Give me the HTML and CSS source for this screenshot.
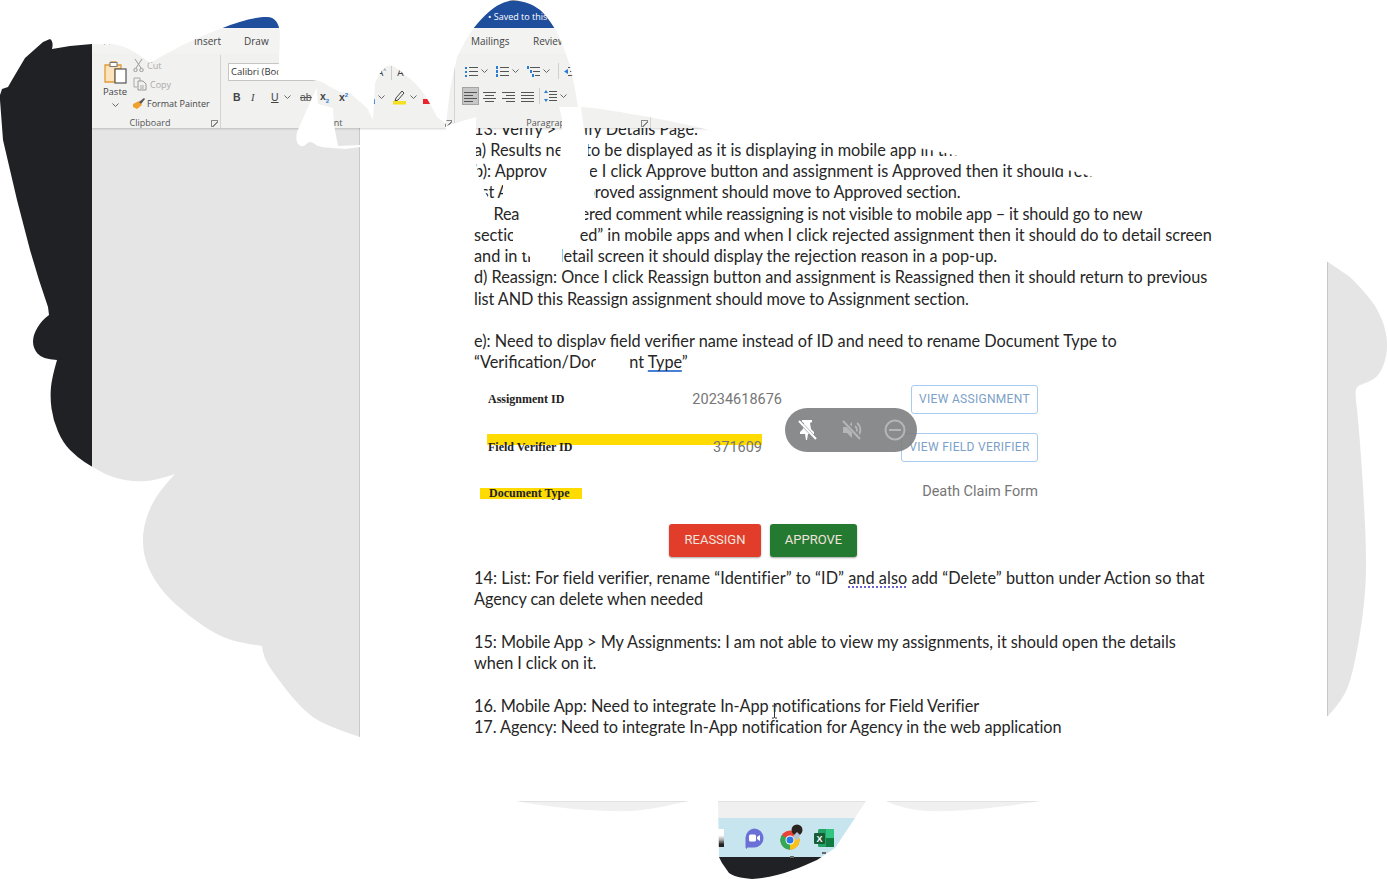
FILE: index.html
```html
<!DOCTYPE html>
<html lang="en">
<head>
<meta charset="utf-8">
<title>Word document</title>
<link rel="stylesheet" href="styles.css">
</head>
<body>
<div class="screen">
  <div class="rail"></div>
  <div class="main">
    <div class="topstrip"></div>
    <div class="titlebar"><span class="saved">• Saved to this PC</span></div>
    <div class="tabs">
      <span class="tab tab-file">File</span>
      <span class="tab tab-home">Home</span>
      <span class="tab tab-insert">Insert</span>
      <span class="tab tab-draw">Draw</span>
      <span class="tab tab-design">Design</span>
      <span class="tab tab-layout">Layout</span>
      <span class="tab tab-mail">Mailings</span>
      <span class="tab tab-review">Review</span>
    </div>
    <div class="ribbon">
      <section class="group g-clip">
        <div class="g-body clip-body">
          <div class="paste">
            <svg width="24" height="24" viewBox="0 0 24 24"><path d="M2 5h5l1-3h5l1 3h4v4H12v13H2z" fill="#fbe3bd" stroke="#e59a35" stroke-width="1.3"/><rect x="7" y="2.500" width="7" height="4" fill="#fff" stroke="#777"/><rect x="12" y="9" width="11" height="14" fill="#fff" stroke="#555" stroke-width="1.2"/></svg>
            <span class="paste-label">Paste</span>
            <svg class="chev" width="7" height="4" viewBox="0 0 7 4"><path d="M.5.5 3.500 3.500 6.500.5" fill="none" stroke="#666"/></svg>
          </div>
          <div class="clip-list">
            <span class="clip-item muted"><svg width="11" height="14" viewBox="0 0 11 14"><path d="M2 1l6 9M9 1 3 10" stroke="#999" fill="none"/><circle cx="2.500" cy="12" r="1.700" fill="none" stroke="#999"/><circle cx="8.500" cy="12" r="1.700" fill="none" stroke="#999"/></svg>Cut</span>
            <span class="clip-item muted"><svg width="14" height="14" viewBox="0 0 14 14"><path d="M1 1h6v3M1 1v9h3" fill="none" stroke="#aaa"/><path d="M5 4h5l3 3v6H5z" fill="none" stroke="#999"/><path d="M7 9h4M7 11h4" stroke="#aaa"/></svg>Copy</span>
            <span class="clip-item clip-fp"><svg width="14" height="13" viewBox="0 0 14 13"><path d="M1 7l6-3 3 4-5 4-4-2z" fill="#f0a12c"/><path d="M7 5l5-4 1 1-4 5" fill="#555"/></svg>Format Painter</span>
          </div>
        </div>
        <div class="g-label g-label-clip">Clipboard<span class="launcher"></span></div>
      </section>
      <section class="group g-font">
        <div class="font-row1">
          <span class="fontbox">Calibri (Body)</span>
          <span class="grow-a">A<sup>^</sup></span>
          <span class="grow-sep"></span>
          <span class="grow-b">A</span>
        </div>
        <div class="font-row2">
          <b class="fb f-b">B</b>
          <i class="fb f-i">I</i>
          <u class="fb f-u">U</u>
          <svg class="chev c-u" width="7" height="4" viewBox="0 0 7 4"><path d="M.5.5 3.500 3.500 6.500.5" fill="none" stroke="#666"/></svg>
          <s class="fb f-s">ab</s>
          <span class="fb f-x">x<sub>2</sub></span>
          <span class="fb f-x2">x<sup>2</sup></span>
          <span class="effects"></span>
          <svg class="chev c-e" width="7" height="4" viewBox="0 0 7 4"><path d="M.5.5 3.500 3.500 6.500.5" fill="none" stroke="#666"/></svg>
          <svg class="hl" width="13" height="15" viewBox="0 0 13 15"><path d="M3 8l6-7 2 2-6 7-3 1z" fill="none" stroke="#444"/><rect y="11" width="13" height="3.500" fill="#f7e11e"/></svg>
          <svg class="chev c-h" width="7" height="4" viewBox="0 0 7 4"><path d="M.5.5 3.500 3.500 6.500.5" fill="none" stroke="#666"/></svg>
          <span class="redbar"></span>
        </div>
        <div class="g-label g-label-font">Font<span class="launcher"></span></div>
      </section>
      <section class="group g-para">
        <div class="para-row1">
          <svg width="13" height="11" viewBox="0 0 13 11"><path d="M4 1.500h9M4 5.500h9M4 9.500h9" stroke="#555"/><path d="M0 1h2v2H0zM0 5h2v2H0zM0 9h2v2H0z" fill="#2b7cd3"/></svg>
          <svg class="chev" width="7" height="4" viewBox="0 0 7 4"><path d="M.5.5 3.500 3.500 6.500.5" fill="none" stroke="#666"/></svg>
          <svg class="ml" width="13" height="11" viewBox="0 0 13 11"><path d="M4 1.500h9M4 5.500h9M4 9.500h9" stroke="#555"/><path d="M0 0h2v3H0zM0 4h2v3H0zM0 8h2v3H0z" fill="#2b7cd3"/></svg>
          <svg class="chev" width="7" height="4" viewBox="0 0 7 4"><path d="M.5.5 3.500 3.500 6.500.5" fill="none" stroke="#666"/></svg>
          <svg class="ml" width="13" height="11" viewBox="0 0 13 11"><path d="M3 1.500h10M6 5.500h7M8 9.500h5" stroke="#555"/><path d="M0 0h2v3H0zM3 4h2v3H3zM5 8h2v3H5z" fill="#2b7cd3"/></svg>
          <svg class="chev" width="7" height="4" viewBox="0 0 7 4"><path d="M.5.5 3.500 3.500 6.500.5" fill="none" stroke="#666"/></svg>
          <span class="psep psep-1"></span>
          <svg width="11" height="11" viewBox="0 0 11 11"><path d="M4 1.500h7M6 5.500h5M4 9.500h7" stroke="#555"/><path d="M0 5.500 4 3v5z" fill="#2b7cd3"/></svg>
        </div>
        <div class="para-row2">
          <span class="align active"><svg width="13" height="11" viewBox="0 0 13 11"><path d="M0 1.500h13M0 4.500h9M0 7.500h13M0 10.500h9" stroke="#555"/></svg></span>
          <svg width="13" height="11" viewBox="0 0 13 11"><path d="M0 1.500h13M2 4.500h9M0 7.500h13M2 10.500h9" stroke="#555"/></svg>
          <svg width="13" height="11" viewBox="0 0 13 11"><path d="M0 1.500h13M4 4.500h9M0 7.500h13M4 10.500h9" stroke="#555"/></svg>
          <svg width="13" height="11" viewBox="0 0 13 11"><path d="M0 1.500h13M0 4.500h13M0 7.500h13M0 10.500h13" stroke="#555"/></svg>
          <span class="psep psep-2"></span>
          <svg width="13" height="12" viewBox="0 0 13 12"><path d="M5 1.500h8M5 4.500h8M5 7.500h8M5 10.500h8" stroke="#555"/><path d="M2 0 4 3H0zM2 12 0 9h4z" fill="#2b7cd3"/></svg>
          <svg class="chev c-ls" width="7" height="4" viewBox="0 0 7 4"><path d="M.5.5 3.500 3.500 6.500.5" fill="none" stroke="#666"/></svg>
        </div>
        <div class="g-label g-label-para">Paragraph<span class="launcher"></span></div>
      </section>
    </div>
    <div class="workspace">
      <article class="page">
        <div class="text">
          <p class="line">13: Verify &gt; Verify Details Page:</p>
          <p class="line">a) Results need to be displayed as it is displaying in mobile app in the list</p>
          <p class="line">b): Approve Once I click Approve button and assignment is Approved then it should return</p>
          <p class="line t1">list AND this Approved assignment should move to Approved section.</p>
          <p class="line t7">c)&nbsp;&nbsp;Reassign entered comment while reassigning is not visible to mobile app – it should go to new</p>
          <p class="line t6">section “Rejected” in mobile apps and when I click rejected assignment then it should do to detail screen</p>
          <p class="line t6">and in that detail screen it should display the rejection reason in a pop-up.</p>
          <p class="line t4">d) Reassign: Once I click Reassign button and assignment is Reassigned then it should return to previous</p>
          <p class="line t2">list AND this Reassign assignment should move to Assignment section.</p>
          <p class="line blank">&nbsp;</p>
          <p class="line">e): Need to display field verifier name instead of ID and need to rename Document Type to</p>
          <p class="line">“Verification/Document <span class="spell">Type</span>”</p>
          <div class="shot">
            <div class="shot-row row-1">
              <span class="shot-label">Assignment ID</span>
              <span class="shot-value v-1">20234618676</span>
              <span class="outline-btn b-1">VIEW ASSIGNMENT</span>
            </div>
            <div class="shot-row row-2">
              <div class="marked">
                <span class="shot-label">Field Verifier ID</span>
                <span class="shot-value v-2">371609</span>
              </div>
              <span class="outline-btn b-2">VIEW FIELD VERIFIER</span>
            </div>
            <div class="shot-row row-3">
              <span class="shot-label marked-doc">Document Type</span>
              <span class="shot-value v-3">Death Claim Form</span>
            </div>
            <div class="shot-actions">
              <span class="solid-btn red">REASSIGN</span>
              <span class="solid-btn green">APPROVE</span>
            </div>
          </div>
          <p class="line t5">14: List: For field verifier, rename “Identifier” to “ID” <span class="grammar">and also</span> add “Delete” button under Action so that</p>
          <p class="line t3">Agency can delete when needed</p>
          <p class="line blank">&nbsp;</p>
          <p class="line t4">15: Mobile App &gt; My Assignments: I am not able to view my assignments, it should open the details</p>
          <p class="line t2">when I click on it.</p>
          <p class="line blank">&nbsp;</p>
          <p class="line t4">16. Mobile App: Need to integrate In-App notifications for Field Verifier</p>
          <p class="line t3">17. Agency: Need to integrate In-App notification for Agency in the web application</p>
        </div>
      </article>
    </div>
    <div class="statusbar"></div>
    <div class="taskbar">
      <span class="tb-app"></span>
      <span class="tb-icon">
        <svg width="24" height="24" viewBox="0 0 24 24"><path d="M12 2.500a9.500 9.500 0 0 1 0 19H5.500l-1 1.500-1-1.500v-10A9.500 9.500 0 0 1 12 2.500z" fill="#6a70d6"/><rect x="7" y="8.500" width="7" height="7" rx="1.500" fill="#fff"/><path d="M15 11l3-2v6l-3-2z" fill="#fff"/></svg>
      </span>
      <span class="tb-icon tb-run">
        <svg width="30" height="30" viewBox="0 0 30 30"><circle cx="13" cy="17" r="9.500" fill="#ea4335"/><path d="M13 17 21.200 12A9.500 9.500 0 0 1 13 26.500z" fill="#f9c21a"/><path d="M13 17 13 26.500A9.500 9.500 0 0 1 4.800 12z" fill="#34a853"/><circle cx="13" cy="17" r="4.500" fill="#fff"/><circle cx="13" cy="17" r="3.500" fill="#2a78e4"/><circle cx="20" cy="7" r="5.500" fill="#2b2320"/><path d="M16 13l4-4 3 3-2 5-3-1z" fill="#b4c2d6"/></svg>
      </span>
      <span class="tb-icon tb-run tb-excel">
        <svg width="22" height="22" viewBox="0 0 22 22"><rect x="5" y="2" width="16" height="18" rx="1.500" fill="#21a366"/><rect x="13" y="2" width="8" height="9" fill="#33c481"/><rect x="13" y="11" width="8" height="9" fill="#107c41"/><rect x="1" y="6" width="11" height="11" rx="1" fill="#185c37"/><text x="6.500" y="15" class="xl-letter">X</text></svg>
      </span>
    </div>
    <div class="bottombar"></div>
  </div>
</div>

<svg class="mask" width="1388" height="879" viewBox="0 0 1388 879" aria-hidden="true">
  <path fill="#fff" fill-rule="evenodd" d="M0 0H1388V879H0Z
    M50 39C53 41 53 45 52 49L70 46L92 44L117 45C130 47 142 57 150 63C165 54 190 40 220 29C240 21 255 17 267 17C275 17 279 23 280 33L279 60L278 80L273 80L313 80C320 81 325 83 327 85L340 92L350 93L367 108L373 120L375 83Q381 70 385 67Q390 64 395 67Q413 80 420 88.500Q427 97 437 117L446 124L450 90L457 57Q463 45 468 36.500Q473 28 481.500 19Q490 10 497.500 5.500Q505 1 512 .5Q520 0 530 4Q540 8 547.500 18Q555 28 559 36.500Q563 45 568 60Q573 75 578 107L581 107C600 108 625 113 649 117C675 122 700 127 720 133C790 134 860 138 900 145C925 149 945 152 965 158C990 160 1020 160 1040 165C1060 168 1080 172 1095 178C1120 190 1140 195 1160 205C1190 220 1215 232 1232 242L1328 262L1350 277Q1370 297 1376.500 308.500Q1383 320 1385.500 331.500Q1388 343 1386.500 353Q1385 363 1381 370.500Q1377 378 1370 381Q1363 384 1360 385Q1357 386 1356 389.500Q1355 393 1356.500 405Q1358 417 1360.500 450Q1363 483 1365 525Q1367 567 1365 592Q1363 617 1358 645Q1353 673 1348 686.500Q1343 700 1328 716L1100 800L1040 801C1010 806 980 810 945 811C925 812 905 810 886 801L866 801L855 818L835 848L817 860C800 868 775 878 752 879C740 878 733 876 729 873L722 863L719 857L718 801L689 801C670 805 650 810 630 811C600 812 560 809 516 801L400 770L360 737Q323 725 311.500 716Q300 707 288.500 692.500Q277 678 270 667.500Q263 657 262 646Q240 643 228.500 639Q217 635 203.500 626Q190 617 176.500 605Q163 593 155 580Q147 567 144.500 555Q142 543 143.500 531.500Q145 520 151 506.500Q157 493 175 474Q157 480 147 481Q137 482 125 480Q113 478 102.500 472.500Q92 467 84.500 462Q77 457 70 450Q63 443 58 431.500Q53 420 51.500 408.500Q50 397 51 387Q52 377 57 360Q42 359 37.500 353.500Q33 348 33 341.500Q33 335 37.500 327.500Q42 320 49 315L48 307L39 280L30 250L17 200L3 140L0 100L0 95L2 89L8 87L12 80L25 58L43 42Z"/>
  <path fill="#fff" d="M297 132L316.500 88L318 104L333 108L334 125L338 146L360 145V147L345 149C330 148 318 147 316 145C310 140 309 142 304 146C298 147 295 142 297 132Z"/>
  <path fill="#fff" d="M446 126L476 117L476 160L478 175L484 190L492 205L494 224L470 230L440 200Z"/>
  <path fill="#fff" d="M559 107L581 107L584 130L588 142L588 160L590 164L590 182L594 184L594 203L585 205L585 225L580 228L580 245L562 248L562 264L530 264L530 257L513 244L513 228L520 220L520 206L503 202L503 184L547 180L547 164L560 158L562 128L562 118Z"/>
  <path fill="#fff" d="M596 345H609L612 350L629 356V374H590L596 360Z"/>
</svg>

<div class="pill">
  <svg width="24" height="24" viewBox="0 0 24 24"><path d="M7 2h10v2l-2 1 1 6 3 3v2h-6l-1 6h-1l-1-6H5v-2l3-3 1-6-2-1z" fill="#fff"/><path d="M3 2l18 19" stroke="#8b8c8d" stroke-width="3"/><path d="M4 3l17 18" stroke="#fff" stroke-width="2"/></svg>
  <svg width="24" height="24" viewBox="0 0 24 24"><path d="M4 9h4l5-5v16l-5-5H4z" fill="#b5b6b7"/><path d="M16 8a5 5 0 0 1 0 8M18 5a9 9 0 0 1 0 14" fill="none" stroke="#b5b6b7" stroke-width="1.800"/><path d="M3 1l19 20" stroke="#8b8c8d" stroke-width="4"/><path d="M4 3l17 18" stroke="#b5b6b7" stroke-width="2"/></svg>
  <svg width="24" height="24" viewBox="0 0 24 24"><circle cx="12" cy="12" r="9.500" fill="none" stroke="#b5b6b7" stroke-width="2"/><path d="M6 12h12" stroke="#b5b6b7" stroke-width="2"/></svg>
</div>
<svg class="ibeam" width="7" height="14" viewBox="0 0 7 14" aria-hidden="true"><path d="M1 1h2l.500.500.500-.500h2M3.500 1.500v11M1 13h2l.500-.500.500.500h2" fill="none" stroke="#333"/></svg>
</body>
</html>
```
FILE: styles.css
```css
* { box-sizing: border-box; }
html, body { margin: 0; padding: 0; background: #fff; }
body { width: 1388px; height: 879px; overflow: hidden; position: relative; font-family: "Open Sans", sans-serif; }

.screen { display: flex; width: 1388px; height: 879px; }
.rail { width: 92px; background: #202125; }
.main { width: 1296px; display: flex; flex-direction: column; background: #202125; }

.topstrip { height: 1px; background: #202125; }
.titlebar { height: 27px; background: #1f4e9d; color: #fff; font-size: 9px; padding: 9px 0 0 396px; line-height: 13px; white-space: nowrap; }

.tabs { height: 27px; background: #f3f3f2; display: flex; align-items: center; font-size: 10px; color: #444; white-space: nowrap; padding-bottom: 2px; }
.tab-file { margin-left: 11px; width: 39px; }
.tab-home { width: 52px; }
.tab-insert { width: 50px; }
.tab-draw { width: 60px; }
.tab-design { width: 60px; }
.tab-layout { width: 107px; }
.tab-mail { width: 62px; }
.tab-review { width: 50px; }

.ribbon { height: 73px; background: #f1f1f0; display: flex; box-shadow: 0 1px 2px rgba(0,0,0,.18); position: relative; z-index: 1; }
.group { position: relative; height: 73px; border-right: 1px solid #d4d4d4; font-size: 9.5px; color: #444; }
.g-clip { width: 129px; }
.g-font { width: 234px; padding-left: 7px; }
.g-para { width: 196px; padding-left: 7px; }
.g-body { height: 60px; }
.clip-body { display: flex; padding: 5px 0 0 8px; }
.paste { width: 30px; display: flex; flex-direction: column; align-items: center; }
.paste-label { margin-top: 2px; line-height: 12px; }
.paste .chev { margin-top: 5px; }
.clip-list { display: flex; flex-direction: column; margin-top: -4px; margin-left: 3px; }
.clip-item { display: flex; align-items: center; gap: 3px; height: 18px; font-size: 9px; white-space: nowrap; color: #444; margin-bottom: 1px; }
.clip-fp { gap: 1px; margin-left: -1px; }
.muted { color: #aaa; }
.g-label { position: absolute; left: 0; right: 0; bottom: -1px; text-align: center; font-size: 9px; line-height: 12px; color: #555; }
.launcher { position: absolute; right: 2px; bottom: 2px; width: 7px; height: 7px; border: 1px solid #888; border-width: 1px 0 0 1px; background: linear-gradient(135deg, transparent 45%, #888 45%, #888 60%, transparent 60%); }
.g-label-clip { padding-right: 12px; }
.g-label-font { padding-right: 9px; }
.g-label-para { padding-right: 8px; letter-spacing: .1px; }

.font-row1 { display: flex; align-items: center; height: 18px; margin-top: 8px; }
.fontbox { width: 100px; height: 18px; background: #fff; border: 1px solid #c6c6c6; font-size: 9.5px; line-height: 16px; padding-left: 2px; color: #333; white-space: nowrap; overflow: hidden; }
.grow-a { margin-left: 49px; font-size: 10px; }
.grow-a sup { font-size: 5px; }
.grow-sep { width: 1px; height: 16px; background: #ccc; margin: 0 5px; }
.grow-b { font-size: 10px; }
.font-row2 { display: flex; align-items: center; height: 20px; margin-top: 6px; padding-left: 5px; }
.fb { font-size: 10.5px; color: #444; font-family: "Liberation Sans", sans-serif; }
.f-b { width: 18px; }
.f-i { width: 20px; font-family: "Liberation Serif", serif; }
.f-u { width: 13px; }
.c-u { margin-right: 9px; }
.f-s { width: 20px; color: #555; }
.f-x { width: 19px; font-weight: 700; }
.f-x sub { font-size: 6px; color: #2b7cd3; }
.f-x2 { width: 32px; font-weight: 700; }
.f-x2 sup { font-size: 6px; color: #2b7cd3; }
.effects { width: 4px; height: 5px; background: #4a90d9; align-self: flex-end; margin-bottom: 3px; }
.c-e { margin: 0 8px 0 3px; }
.hl { margin-right: 4px; }
.c-h { margin-right: 6px; }
.redbar { width: 9px; height: 5px; background: #e8232a; align-self: flex-end; margin-bottom: 3px; }

.para-row1 { display: flex; align-items: center; gap: 3px; height: 18px; margin-top: 7px; padding-left: 3px; }
.para-row1 .ml { margin-left: 5px; }
.para-row2 { display: flex; align-items: center; gap: 6px; height: 18px; margin-top: 7px; }
.align { display: flex; align-items: center; justify-content: center; width: 17px; height: 18px; margin-right: -2px; }
.align.active { background: #c7c7c7; border: 1px solid #a4a4a4; }
.psep { width: 1px; height: 16px; background: #d0d0d0; }
.psep-1 { margin: 0 2px 0 5px; }
.psep-2 { margin: 0 -2px 0 -1px; }
.c-ls { margin-left: -3px; }

.workspace { height: 673px; background: #e5e5e5; padding-left: 267px; }
.page { width: 969px; height: 673px; background: #fff; border-left: 1px solid #c9c9c9; border-right: 1px solid #c9c9c9; overflow: hidden; }
.text { margin: -10.5px 0 0 114px; }
.line { margin: 0; height: 21.27px; line-height: 21.27px; font-family: Lato, sans-serif; font-size: 16.3px; color: #262626; white-space: nowrap; }
.t1 { letter-spacing: -.13px; }
.t2 { letter-spacing: -.1px; }
.t3 { letter-spacing: -.08px; }
.t4 { letter-spacing: -.04px; }
.t5 { letter-spacing: .05px; }
.t6 { letter-spacing: -.02px; }
.t7 { letter-spacing: -.19px; }
.spell { text-decoration: underline 2px #4a7fd6; text-underline-offset: 2px; }
.grammar { text-decoration: underline dotted #4b3ec9; text-underline-offset: 2px; }

.shot { height: 194.5px; width: 564px; padding-top: 3px; font-family: Roboto, sans-serif; }
.shot-row { display: flex; align-items: center; }
.shot-label { font-family: "Liberation Serif", serif; font-weight: 700; font-size: 12px; color: #222; white-space: nowrap; }
.shot-value { font-size: 14.5px; color: #767676; white-space: nowrap; }
.row-1 { height: 48.5px; padding-left: 14px; }
.v-1 { margin-left: 128px; }
.b-1 { margin-left: auto; width: 127px; }
.row-2 { height: 47px; padding-left: 13px; }
.marked { width: 275px; height: 22px; margin-bottom: 8px; display: flex; align-items: flex-end; justify-content: space-between; padding-left: 1px; line-height: 16px; background: linear-gradient(#ffdb00, #ffdb00) no-repeat 0 1px / 100% 11px; }
.v-2 { margin-bottom: -1px; }
.b-2 { margin-left: auto; width: 137px; }
.row-3 { height: 44px; padding-left: 6px; }
.marked-doc { width: 102px; padding-left: 9px; background: linear-gradient(#ffdb00, #ffdb00) no-repeat 0 3px / 100% 11px; line-height: 16px; }
.v-3 { margin: 0 0 4px auto; }
.outline-btn { height: 29px; border: 1px solid #a9cbef; border-radius: 3px; font-size: 12px; letter-spacing: .3px; color: #7c9fc8; text-align: center; line-height: 27px; white-space: nowrap; }
.shot-actions { display: flex; gap: 9px; margin: 9px 0 0 195px; }
.solid-btn { height: 33px; border-radius: 3px; color: #f1e3dd; font-size: 13px; text-align: center; line-height: 32px; box-shadow: 0 1px 2px rgba(0,0,0,.35); }
.red { width: 92px; background: #e23d2a; }
.green { width: 87px; background: #257a32; }

.statusbar { height: 17px; background: #f0f0f0; border-top: 1px solid #e2e2e2; }
.taskbar { height: 39px; background: #c7e5ee; display: flex; align-items: center; padding-left: 626px; }
.tb-app { width: 6px; height: 18px; background: linear-gradient(#fff 35%, #aaa 60%, #222 85%); margin-right: 18px; }
.tb-icon { display: flex; justify-content: center; position: relative; }
.tb-run { margin-left: 11px; }
.tb-run::after { content: ""; position: absolute; left: 50%; bottom: -5px; width: 4px; height: 2px; margin-left: -2px; background: #666; }
.tb-excel { margin-left: 6px; }
.xl-letter { font: 700 9px "Liberation Sans", sans-serif; fill: #fff; text-anchor: middle; }
.bottombar { flex: 1; background: #202125; }

.mask { position: absolute; left: 0; top: 0; z-index: 5; }
.pill { position: absolute; z-index: 6; left: 785px; top: 408px; width: 132px; height: 44px; border-radius: 22px; background: rgba(125,126,127,.9); display: flex; align-items: center; gap: 20px; padding-left: 10px; }
.ibeam { position: absolute; z-index: 6; left: 771px; top: 705px; }
```
